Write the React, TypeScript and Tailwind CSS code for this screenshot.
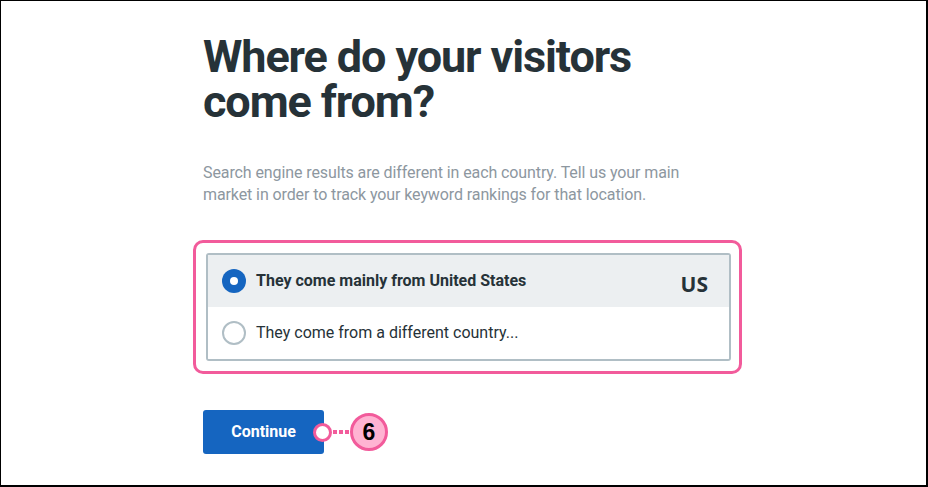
import { useState } from 'react';

const options = [
  { id: 'us', label: 'They come mainly from United States', code: 'US' },
  { id: 'other', label: 'They come from a different country...', code: '' },
];

function Radio({ checked }: { checked: boolean }) {
  return checked ? (
    <span className="flex items-center justify-center w-6 h-6 rounded-full bg-[#1565c0]">
      <span className="w-2 h-2 rounded-full bg-white" />
    </span>
  ) : (
    <span className="w-6 h-6 rounded-full border-2 border-[#b0bec5] bg-white" />
  );
}

export default function App() {
  const [selected, setSelected] = useState('us');

  return (
    <div className="w-[928px] h-[487px] bg-white border-t border-l border-r-2 border-b-2 border-black font-['Roboto',sans-serif] text-[#263238] overflow-hidden">
      <div className="ml-[192px] w-[549px] flex flex-col">
        <h1 className="mt-[33px] pl-[10px] text-[45px] leading-[45px] font-bold tracking-[-1.1px] text-[#263238]">
          Where do your visitors
          <br />
          come from?
        </h1>

        <p className="mt-[38px] pl-[10px] text-[16px] leading-[22px] tracking-[-0.1px] text-[#8d979f]">
          Search engine results are different in each country. Tell us your main
          <br />
          market in order to track your keyword rankings for that location.
        </p>

        {/* Highlighted option group */}
        <div className="mt-[34px] border-[3px] border-[#f25b9b] rounded-[10px] pl-[10px] pr-[8px] py-[10px]">
          <div className="border-2 border-[#b0bec5] rounded-[3px] overflow-hidden">
            {options.map(opt => {
              const checked = selected === opt.id;
              return (
                <div
                  key={opt.id}
                  onClick={() => setSelected(opt.id)}
                  className={`flex items-center h-[52px] pl-[14px] pr-[21px] cursor-pointer ${
                    checked ? 'bg-[#eceff1]' : 'bg-white'
                  }`}
                >
                  <Radio checked={checked} />
                  <span
                    className={`ml-[10px] text-[16px] ${
                      checked ? 'font-bold' : 'font-normal'
                    }`}
                  >
                    {opt.label}
                  </span>
                  {opt.code && (
                    <span className="ml-auto mt-[8px] font-['Open_Sans',sans-serif] text-[21px] font-bold text-[#263238]">
                      {opt.code}
                    </span>
                  )}
                </div>
              );
            })}
          </div>
        </div>

        {/* Continue button with step marker */}
        <div className="relative mt-[36px] ml-[10px] w-fit">
          <button className="w-[121px] h-[44px] rounded-[3px] bg-[#1565c0] text-white text-[16px] font-bold">
            Continue
          </button>
          <div className="absolute left-[110px] top-[3px] flex items-center">
            <span className="w-[19px] h-[19px] rounded-full border-[3px] border-[#f25b9b] bg-white" />
            <span className="flex gap-[2px] mx-[1px]">
              <span className="w-[4px] h-[4px] bg-[#f25b9b]" />
              <span className="w-[4px] h-[4px] bg-[#f25b9b]" />
              <span className="w-[4px] h-[4px] bg-[#f25b9b]" />
            </span>
            <span className="flex items-center justify-center w-[38px] h-[38px] rounded-full border-[3px] border-[#f25b9b] bg-[#ffb3d2] text-black text-[23px] font-semibold font-['Liberation_Sans',sans-serif]">
              6
            </span>
          </div>
        </div>
      </div>
    </div>
  );
}
